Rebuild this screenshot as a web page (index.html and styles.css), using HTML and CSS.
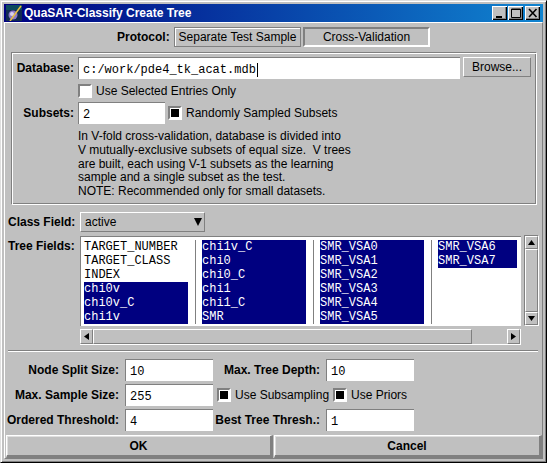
FILE: index.html
```html
<!DOCTYPE html>
<html lang="en">
<head>
    <meta charset="UTF-8">
    <title>QuaSAR-Classify Create Tree</title>
    <link rel="stylesheet" href="styles.css">
</head>
<body>
    <div class="window">
        <div class="titlebar">
            <svg class="app-icon" width="16" height="16" viewBox="0 0 16 16">
                <rect width="16" height="16" fill="#102a50"/>
                <rect x="0" y="0" width="16" height="5" fill="#0c4a5c"/>
                <circle cx="7" cy="10" r="4.500" fill="#8a78c8"/>
                <circle cx="6" cy="9" r="2" fill="#d8d0f0"/>
                <path d="M4 16 L15 1" stroke="#e8c040" stroke-width="1.500"/>
            </svg>
            <span class="title-text">QuaSAR-Classify Create Tree</span>
            <div class="win-buttons">
                <div class="win-btn"><svg width="12" height="10" viewBox="0 0 12 10"><rect x="2" y="8" width="6" height="2" fill="#000"/></svg></div>
                <div class="win-btn"><svg width="12" height="10" viewBox="0 0 12 10"><path d="M1.500 1H10.500V9.500H1.500Z M1 1.500H11" fill="none" stroke="#000"/></svg></div>
                <div class="win-btn close"><svg width="12" height="10" viewBox="0 0 12 10"><path d="M2 1L9.500 9M9.500 1L2 9" fill="none" stroke="#000" stroke-width="1.600"/></svg></div>
            </div>
        </div>

        <div class="content">
            <div class="protocol">
                <span class="label">Protocol:</span>
                <div class="toggle">Separate Test Sample</div>
                <div class="toggle pressed">Cross-Validation</div>
            </div>

            <div class="panel">
                <div class="row db-row">
                    <span class="label panel-label">Database:</span>
                    <div class="field db-field">c:/work/pde4_tk_acat.mdb<span class="caret"></span></div>
                    <div class="button browse">Browse...</div>
                </div>
                <div class="row check-row">
                    <span class="check"></span>
                    <span class="text">Use Selected Entries Only</span>
                </div>
                <div class="row subsets-row">
                    <span class="label panel-label">Subsets:</span>
                    <div class="field subsets-field">2</div>
                    <span class="check on"></span>
                    <span class="text">Randomly Sampled Subsets</span>
                </div>
                <p class="help">In V-fold cross-validation, database is divided into<br>V mutually-exclusive subsets of equal size.&nbsp; V trees<br>are built, each using V-1 subsets as the learning<br>sample and a single subset as the test.<br>NOTE: Recommended only for small datasets.</p>
            </div>

            <div class="row class-row">
                <span class="label side-label">Class Field:</span>
                <div class="select">
                    <span>active</span>
                    <svg width="8" height="8" viewBox="0 0 8 8"><path d="M0 0H8L4 8Z" fill="#000"/></svg>
                </div>
            </div>

            <div class="tree-row">
                <span class="label side-label">Tree Fields:</span>
                <div class="tree-main">
                    <div class="list">
                        <div class="col col1">
                            <div>TARGET_NUMBER</div>
                            <div>TARGET_CLASS</div>
                            <div>INDEX</div>
                            <div class="sel">chi0v</div>
                            <div class="sel">chi0v_C</div>
                            <div class="sel">chi1v</div>
                        </div>
                        <div class="col col2">
                            <div class="sel">chi1v_C</div>
                            <div class="sel">chi0</div>
                            <div class="sel">chi0_C</div>
                            <div class="sel">chi1</div>
                            <div class="sel">chi1_C</div>
                            <div class="sel">SMR</div>
                        </div>
                        <div class="col col3">
                            <div class="sel">SMR_VSA0</div>
                            <div class="sel">SMR_VSA1</div>
                            <div class="sel">SMR_VSA2</div>
                            <div class="sel">SMR_VSA3</div>
                            <div class="sel">SMR_VSA4</div>
                            <div class="sel">SMR_VSA5</div>
                        </div>
                        <div class="col col4">
                            <div class="sel">SMR_VSA6</div>
                            <div class="sel">SMR_VSA7</div>
                        </div>
                    </div>
                    <div class="hscroll">
                        <div class="arrow"><svg width="5" height="7" viewBox="0 0 5 7"><path d="M5 0V7L0 3.500Z" fill="#000"/></svg></div>
                        <div class="thumb h-thumb"></div>
                        <div class="h-track"></div>
                        <div class="arrow"><svg width="5" height="7" viewBox="0 0 5 7"><path d="M0 0V7L5 3.500Z" fill="#000"/></svg></div>
                    </div>
                </div>
                <div class="vscroll">
                    <div class="arrow"><svg width="7" height="5" viewBox="0 0 7 5"><path d="M0 5H7L3.500 0Z" fill="#000"/></svg></div>
                    <div class="thumb v-thumb"></div>
                    <div class="arrow"><svg width="7" height="5" viewBox="0 0 7 5"><path d="M0 0H7L3.500 5Z" fill="#000"/></svg></div>
                </div>
            </div>

            <div class="separator"></div>

            <div class="opts">
                <span class="label opt-label">Node Split Size:</span>
                <div class="field opt-field">10</div>
                <span class="label opt-label">Max. Tree Depth:</span>
                <div class="field opt-field">10</div>

                <span class="label opt-label">Max. Sample Size:</span>
                <div class="field opt-field">255</div>
                <div class="opt-checks">
                    <span class="check on"></span>
                    <span class="text">Use Subsampling</span>
                    <span class="check on"></span>
                    <span class="text">Use Priors</span>
                </div>

                <span class="label opt-label">Ordered Threshold:</span>
                <div class="field opt-field">4</div>
                <span class="label opt-label">Best Tree Thresh.:</span>
                <div class="field opt-field">1</div>
            </div>

            <div class="actions">
                <div class="button action ok">OK</div>
                <div class="button action cancel">Cancel</div>
            </div>
        </div>
    </div>
</body>
</html>
```

FILE: styles.css
```css
html, body {
    margin: 0;
    padding: 0;
    background: #c0c0c0;
}
body {
    width: 547px;
    height: 463px;
    overflow: hidden;
    font-family: 'Liberation Sans', Arial, sans-serif;
    font-size: 12px;
    color: #000;
}
.window {
    box-sizing: border-box;
    width: 547px;
    height: 463px;
    padding: 3px;
    background: #c0c0c0;
    border: 1px solid;
    border-color: #dfdfdf #000 #000 #dfdfdf;
    box-shadow: inset 1px 1px 0 #fff, inset -1px -1px 0 #808080;
}
.titlebar {
    display: flex;
    align-items: center;
    height: 18px;
    background: linear-gradient(90deg, #000080, #1084d0);
    color: #fff;
    font-weight: bold;
    font-size: 12px;
}
.app-icon {
    margin: 0 2px 0 2px;
}
.title-text {
    flex: 1;
}
.win-buttons {
    display: flex;
    gap: 1px;
    margin-right: 3px;
}
.win-btn {
    box-sizing: border-box;
    width: 15px;
    height: 14px;
    display: flex;
    align-items: center;
    justify-content: center;
    background: #c0c0c0;
    box-shadow: inset 1px 1px 0 #fff, inset -1px -1px 0 #000, inset -2px -2px 0 #808080;
}
.win-btn.close {
    margin-left: 1px;
}
.content {
    box-sizing: border-box;
    height: 437px;
    padding-left: 1px;
    border: 1px solid;
    border-color: #fff #808080 #808080 #fff;
}
.row {
    display: flex;
    align-items: center;
}
.label {
    font-weight: bold;
    white-space: nowrap;
}
.text {
    white-space: nowrap;
    color: #000;
}
.protocol {
    display: flex;
    align-items: center;
    height: 20px;
    margin-top: 4px;
    padding-left: 111px;
}
.protocol .label {
    width: 55px;
    margin-right: 2px;
    text-align: left;
}
.toggle {
    box-sizing: border-box;
    width: 127px;
    height: 20px;
    line-height: 18px;
    text-align: center;
    border: 1px solid #808080;
    box-shadow: inset 1px 1px 0 #fff;
}
.toggle.pressed {
    margin-left: 2px;
    line-height: 17px;
    border-width: 2px;
    border-color: #808080 #fff #fff #808080;
    box-shadow: none;
}
.panel {
    box-sizing: border-box;
    height: 153px;
    margin: 5px 0 0 5px;
    width: 526px;
    padding: 4px 0 0 4px;
    border: 1px solid;
    border-color: #808080 #fff #fff #808080;
    box-shadow: inset 1px 1px 0 #fff, inset -1px -1px 0 #808080;
}
.panel-label {
    width: 58px;
    text-align: right;
    margin-right: 4px;
    flex: none;
}
.field {
    box-sizing: border-box;
    height: 22px;
    padding: 5px 0 0 4px;
    background: #fff;
    border-top: 1px solid #808080;
    border-left: 1px solid #808080;
    font-family: 'Liberation Mono', 'Courier New', monospace;
    font-size: 12px;
    line-height: 14px;
    white-space: nowrap;
}
.db-field {
    width: 382px;
}
.caret {
    display: inline-block;
    width: 1px;
    height: 14px;
    margin-left: 1px;
    vertical-align: top;
    background: #000;
}
.button {
    box-sizing: border-box;
    text-align: center;
    background: #c0c0c0;
    border: 1px solid;
    border-color: #fff #808080 #808080 #fff;
}
.browse {
    width: 68px;
    height: 20px;
    line-height: 18px;
    margin-left: 3px;
    align-self: flex-start;
}
.check-row {
    height: 14px;
    margin-top: 5px;
    padding-left: 62px;
}
.check {
    box-sizing: border-box;
    display: inline-flex;
    align-items: center;
    justify-content: center;
    flex: none;
    width: 14px;
    height: 14px;
    margin-right: 4px;
    background: #fff;
    border: 2px solid;
    border-color: #808080 #fff #fff #808080;
}
.check.on::after {
    content: "";
    width: 8px;
    height: 8px;
    background: #000;
}
.subsets-row {
    margin-top: 4px;
}
.subsets-field {
    width: 87px;
    margin-right: 3px;
}
.help {
    margin: 6px 0 0 62px;
    line-height: 13.800px;
    white-space: nowrap;
}
.class-row {
    margin-top: 6px;
    height: 21px;
}
.side-label {
    width: 72px;
    margin-left: 2px;
    padding-top: 1px;
    flex: none;
}
.select {
    box-sizing: border-box;
    display: flex;
    align-items: center;
    justify-content: space-between;
    width: 125px;
    height: 20px;
    padding: 0 2px 0 4px;
    border: 1px solid;
    border-color: #fff #808080 #808080 #fff;
}
.tree-row {
    display: flex;
    align-items: flex-start;
    margin-top: 4px;
}
.tree-row .side-label {
    margin-top: 2px;
}
.tree-main {
    width: 441px;
    flex: none;
}
.list {
    box-sizing: border-box;
    display: flex;
    height: 90px;
    padding: 3px 0 0 3px;
    background: #fff;
    border-top: 1px solid #808080;
    border-left: 1px solid #808080;
    font-family: 'Liberation Mono', 'Courier New', monospace;
    font-size: 12px;
}
.col {
    height: 84px;
    padding-right: 7px;
    margin-right: 6px;
    border-right: 1px solid #808080;
    line-height: 14px;
    white-space: nowrap;
}
.col1, .col2, .col3 { width: 104px; }
.col4 { width: 79px; margin: 0; padding: 0; border: 0; }
.sel {
    background: #000080;
    color: #fff;
}
.hscroll {
    display: flex;
    height: 15px;
    margin-top: 3px;
    border-right: 1px solid #fff;
    border-bottom: 1px solid #fff;
}
.arrow {
    box-sizing: border-box;
    display: flex;
    flex: none;
    align-items: center;
    justify-content: center;
    width: 13px;
    height: 13px;
    border: 1px solid;
    border-color: #fff #808080 #808080 #fff;
}
.hscroll .arrow {
    height: 15px;
}
.thumb {
    box-sizing: border-box;
    border: 1px solid;
    border-color: #fff #808080 #808080 #fff;
}
.h-thumb {
    width: 379px;
    height: 15px;
}
.h-track {
    flex: 1;
}
.vscroll {
    box-sizing: border-box;
    display: flex;
    flex-direction: column;
    width: 15px;
    height: 91px;
    margin: -1px 0 0 3px;
    border: 1px solid;
    border-color: #808080 #fff #fff #808080;
}
.v-thumb {
    flex: 1;
}
.separator {
    height: 1px;
    margin: 5px 4px 0 2px;
    background: #808080;
    border-bottom: 1px solid #fff;
}
.opts {
    display: grid;
    grid-template-columns: 118px 88px 113px 88px;
    grid-auto-rows: 22px;
    row-gap: 3px;
    align-items: center;
    margin: 7px 0 0 1px;
}
.opt-label {
    text-align: right;
    padding-right: 6px;
}
.opt-checks {
    grid-column: 3 / 5;
    display: flex;
    align-items: center;
    padding-left: 4px;
}
.opt-checks .text {
    margin-right: 4px;
}
.actions {
    display: flex;
    gap: 1px;
    margin-top: 4px;
}
.action {
    height: 23px;
    line-height: 20px;
    font-weight: bold;
    border-width: 1px 3px 3px 1px;
    box-shadow: inset 1px 1px 0 #dfdfdf;
}
.ok { width: 267px; }
.cancel { width: 268px; }
```
